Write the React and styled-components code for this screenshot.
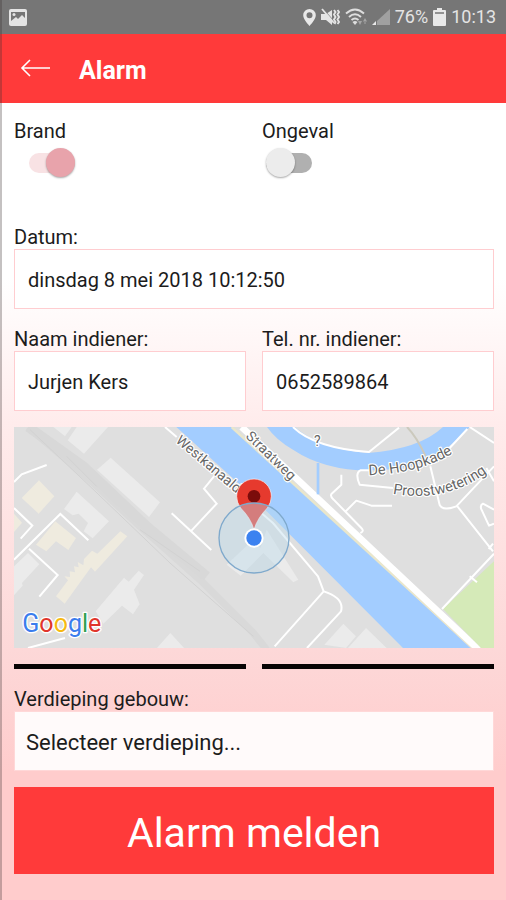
import React from "react";
import styled, { createGlobalStyle } from "styled-components";

const GlobalStyle = createGlobalStyle`
  *, *::before, *::after { box-sizing: border-box; }
  body { margin: 0; font-family: Roboto, "Liberation Sans", sans-serif; color: #1c1c1c; }
`;

const Page = styled.div`
  position: relative;
  display: flex;
  flex-direction: column;
  min-height: 100vh;
  background: #fff;

  &::before {
    content: "";
    position: absolute;
    inset: 0 auto 0 0;
    width: 2px;
    background: rgba(60, 50, 50, 0.3);
    pointer-events: none;
  }
`;

const StatusBar = styled.div`
  display: flex;
  align-items: center;
  justify-content: space-between;
  height: 34px;
  padding: 0 10px 0 9px;
  background: #767676;
  color: #e4e4e4;
  font-size: 18px;
  line-height: 34px;
`;

const StatusGroup = styled.div`
  display: flex;
  align-items: center;
  gap: 5px;
`;

const Header = styled.header`
  display: flex;
  align-items: center;
  gap: 28px;
  height: 69px;
  padding: 0 20px;
  background: #ff3a3a;
  color: #fff;
`;

const BackButton = styled.button`
  display: flex;
  padding: 0;
  border: 0;
  background: none;
  color: inherit;
  cursor: pointer;
`;

const Title = styled.h1`
  margin: 0;
  padding-top: 4px;
  font-size: 25px;
  line-height: 32px;
  font-weight: 700;
`;

const Form = styled.form`
  display: flex;
  flex: 1;
  flex-direction: column;
  padding: 16px 12px 26px 14px;
  background: linear-gradient(#fff 0%, #fff 22%, #ffecec 40%, #fdd7d7 70%, #ffcccc 84%);
`;

const Columns = styled.div`
  display: grid;
  grid-template-columns: 1fr 1fr;
  gap: 16px;
  margin-bottom: ${(p) => p.$after}px;
`;

const Field = styled.div`
  display: flex;
  flex-direction: column;
  min-width: 0;
  margin-bottom: ${(p) => p.$after || 0}px;
`;

const Label = styled.label`
  font-size: 20px;
  line-height: 24px;
`;

const Switch = styled.input`
  appearance: none;
  display: flex;
  align-items: center;
  width: 46px;
  height: 29px;
  margin: 5px 0 0 ${(p) => p.$indent}px;
  border-radius: 15px;
  cursor: pointer;

  &::before {
    content: "";
    width: 46px;
    height: 20px;
    border-radius: 10px;
    background: #b0b0b0;
  }
  &::after {
    content: "";
    flex: none;
    width: 29px;
    height: 29px;
    margin-left: -46px;
    border-radius: 50%;
    background: #ececec;
    box-shadow: 0 1px 2px rgba(0, 0, 0, 0.35);
  }
  &:checked::before { background: #f8e2e4; }
  &:checked::after { margin-left: -29px; background: #e8a3ab; }
`;

const TextInput = styled.input`
  width: 100%;
  height: 60px;
  padding: 2px 13px 0;
  border: 1px solid #ffcdd0;
  border-radius: 0;
  background: #fff;
  color: inherit;
  font: 20px Roboto, "Liberation Sans", sans-serif;
`;

const Select = styled.select`
  appearance: none;
  width: 100%;
  height: 60px;
  padding: 2px 11px 0;
  border: 1px solid #ffd8d8;
  border-radius: 0;
  background: #fffafa;
  color: inherit;
  font: 22px Roboto, "Liberation Sans", sans-serif;
`;

const MapView = styled.svg`
  display: block;
  width: 100%;
  height: 221px;
  margin-bottom: 16px;
  background: #dfdfdf;
`;

const Divider = styled.hr`
  width: 100%;
  height: 5px;
  margin: 0;
  border: 0;
  background: #080404;
`;

const SubmitButton = styled.button`
  height: 87px;
  padding: 4px 0 0;
  border: 0;
  background: #ff3a3a;
  color: #fff;
  font: 41px Roboto, "Liberation Sans", sans-serif;
  cursor: pointer;
`;

const PictureIcon = () => (
  <svg width="18" height="17" viewBox="0 0 18 17" aria-hidden="true">
    <rect width="18" height="17" rx="2" fill="#e4e4e4" />
    <path d="M2 3h14v6l-3-3-4 4-2-2-5 4z" fill="#767676" />
    <circle cx="5" cy="5.500" r="1.500" fill="#e4e4e4" />
  </svg>
);

const PinIcon = () => (
  <svg width="13" height="17" viewBox="0 0 13 17" aria-hidden="true">
    <path fillRule="evenodd" d="M6.500 0A6.300 6.300 0 0 0 .2 6.300C.2 10.500 6.500 17 6.500 17s6.300-6.500 6.300-10.700A6.300 6.300 0 0 0 6.500 0zm0 3.300a3 3 0 1 1 0 6 3 3 0 0 1 0-6z" fill="#e8e8e8" />
  </svg>
);

const MutedIcon = () => (
  <svg width="19" height="18" viewBox="0 0 19 18" fill="none" aria-hidden="true">
    <path d="M0 6h5l6-4v15l-6-5H0z" fill="#e4e4e4" />
    <path d="M2 1l11 12" stroke="#767676" strokeWidth="1" />
    <path d="M1 1l12 14" stroke="#e4e4e4" strokeWidth="1.800" />
    <path d="M13 2l1.500 2L13 6.500l1.500 2.500L13 11.500l1.500 2.500-1 2M16.500 2L18 4l-1.500 2.500L18 9l-1.500 2.500L18 14l-1.500 2" stroke="#e4e4e4" strokeWidth="1.900" />
  </svg>
);

const WifiIcon = () => (
  <svg width="22" height="18" viewBox="0 0 22 18" fill="none" aria-hidden="true">
    <path d="M1 5.500Q10 -2.500 19 5.500M4 9q6-5.500 12 0M6.500 12q3.500-3 7 0" stroke="#dedede" strokeWidth="1.900" />
    <path d="M7.500 14q2.500-2 5 0L10 17z" fill="#dedede" />
    <path d="M13 13h4l-2 4zM18 13.500h4l-2-3.500zM19.500 13h1v3h-1z" fill="#a6a6a6" />
  </svg>
);

const SignalIcon = () => (
  <svg width="18" height="18" viewBox="0 0 18 18" aria-hidden="true">
    <path d="M18 1v16H5v-4z" fill="#a0a0a0" />
    <path d="M4 13v4H0z" fill="#e8e8e8" />
  </svg>
);

const BatteryIcon = () => (
  <svg width="13" height="18" viewBox="0 0 13 18" aria-hidden="true">
    <path d="M4 0h5v2h3q1 0 1 1v14q0 1-1 1H1q-1 0-1-1V3q0-1 1-1h3z" fill="#e8e8e8" />
    <path d="M2 4h9v2H2z" fill="#929292" />
  </svg>
);

const BackIcon = () => (
  <svg width="31" height="20" viewBox="0 0 31 20" fill="none" stroke="#fff" strokeWidth="1.600" aria-hidden="true">
    <path d="M10 1L2 9l8 8M2 9h28" />
  </svg>
);

const GOOGLE = [
  ["G", "#3b7ded"],
  ["o", "#e0352b"],
  ["o", "#f6b912"],
  ["g", "#3b7ded"],
  ["l", "#2fa04e"],
  ["e", "#e0352b"],
];

const LocationMap = () => (
  <MapView viewBox="42 22 1440 663" preserveAspectRatio="xMidYMid slice" role="img" aria-label="Kaart">
    <defs>
      <path id="westkanaal" d="M525 66L750 256" />
      <path id="straatweg" d="M735 52L900 212" />
      <path id="hoopkade" d="M1106 167Q1280 160 1380 86" />
      <path id="proost" d="M1178 222Q1350 254 1485 140" />
    </defs>

    <g fill="none">
      <path d="M85 22L280 190 420 320 600 480 760 640 800 690" strokeWidth="22" stroke="#d9d9d9" />
      <path d="M85 22L250 140 440 320 620 470" strokeWidth="30" stroke="#d8d8d8" />
      <path d="M90 30L270 200 510 430 760 650M200 110L290 200 M420 330L600 455" strokeWidth="3" stroke="#d2d2d2" />
    </g>

    <g fill="#ebebeb">
      <path d="M160 22L195 50 215 22zM230 22H324L252 102 203 62z" />
      <path d="M332 114L480 248 447 292 291 150z" />
      <path d="M230 216L327 305 278 356 251 335 264 310 236 282 218 287 192 268z" />
      <path d="M42 440L84 400 118 434 66 490 68 498 42 527z" />
      <path d="M372 474L386 486 416 453 432 466 402 510 419 554 399 584 366 558 310 612 287 575z" />
      <path d="M470 686L511 640 553 686z" />
      <path d="M973 675L1030 612 1068 650 1038 685zM1044 685L1098 625 1160 685z" />
      <path d="M680 435L755 365 795 395 722 468zM800 330L895 480 880 488 780 390z" />
    </g>
    <g fill="#efebdf">
      <path d="M117 182L163 230 116 282 65 235z" />
      <path d="M42 282L66 309 42 337z" />
      <path d="M166 305L228 355 205 391 168 365 139 395 108 375z" />
      <path d="M361 335L382 350 285 456 273 443 194 552 168 530 204 482 193 470 210 472 209 455 225 458 222 440 236 443 233 427 250 437 252 418 276 393 292 402z" />
    </g>

    <g fill="none" stroke="#fff" strokeWidth="6">
      <path d="M42 187L65 164 140 136M42 265L97 318 62 357M42 420L181 283 265 362M87 387L173 466 118 531M84 685L195 655" />
      <path d="M642 170L612 207 650 252 575 332M515 281L634 391M495 22L530 52" />
    </g>

    <path d="M529 22H700L1412 686H1210L860 335 720 195z" fill="#a3cdff" />
    <path d="M695 22L1420 686" stroke="#e9e6cb" strokeWidth="8" />
    <path d="M725 22L1436 690" stroke="#fff" strokeWidth="20" />

    <g transform="translate(759 0)">
      <path d="M42 22H125Q200 88 345 100Q500 88 570 22H650Q555 130 430 147Q240 170 120 90Q70 62 42 22z" fill="#a3cdff" />
      <path d="M195 130V224" stroke="#a3cdff" strokeWidth="8" />
      <path d="M723 425V685H684L570 568z" fill="#d5eab8" />
      <g fill="none" stroke="#fff" strokeWidth="6" strokeLinejoin="round">
        <path d="M120 22Q185 85 348 97L438 24" />
        <path d="M532 140L560 256Q570 275 610 260L723 140M650 22L723 70M643 28L590 85M610 256L720 395M723 402L567 568M720 372L707 388M650 470L672 488" />
        <path d="M420 205L320 195Q305 160 322 152H350M265 165V195L236 222Q230 230 242 240L325 325Q335 335 322 340M278 275L310 243 355 258H417M723 185L700 145M723 270L690 252Q678 258 688 275L708 318 723 312" />
        <path d="M25 280L60 310 195 470 212 515 65 680M212 515Q275 535 264 575L162 685" />
      </g>
      <path d="M462 22Q490 50 518 110" fill="none" stroke="#cbc9bd" strokeWidth="6" />
    </g>

    <g fill="#666" stroke="#fff" strokeWidth="7" strokeLinejoin="round" paintOrder="stroke" fontSize="42">
      <text><textPath href="#westkanaal">Westkanaald</textPath></text>
      <text><textPath href="#straatweg">Straatweg</textPath></text>
      <text fontSize="44"><textPath href="#hoopkade">De Hoopkade</textPath></text>
      <text fontSize="44"><textPath href="#proost">Proostwetering</textPath></text>
      <text x="942" y="80">?</text>
    </g>

    <path d="M762 330Q752 295 722 265Q710 248 710 230A52 52 0 0 1 814 230Q814 248 802 265Q772 295 762 330z" fill="#e63a2e" stroke="#fff" strokeOpacity=".6" strokeWidth="3" />
    <circle cx="762" cy="230" r="19" fill="#7b0c0b" />
    <circle cx="762" cy="355" r="105" fill="#bddcec" fillOpacity=".42" stroke="#7fa9cc" strokeWidth="4" />
    <circle cx="762" cy="355" r="29" fill="#fff" />
    <circle cx="762" cy="355" r="23" fill="#3b82f0" />

    <text x="67" y="637" fontSize="75" stroke="#fff" strokeWidth="8" strokeLinejoin="round" paintOrder="stroke">
      {GOOGLE.map(([letter, color], i) => (
        <tspan key={i} fill={color}>{letter}</tspan>
      ))}
    </text>
  </MapView>
);

export default function App() {
  return (
    <>
      <GlobalStyle />
      <Page>
        <StatusBar>
          <PictureIcon />
          <StatusGroup>
            <PinIcon />
            <MutedIcon />
            <WifiIcon />
            <SignalIcon />
            <span>76%</span>
            <BatteryIcon />
            <span>10:13</span>
          </StatusGroup>
        </StatusBar>
        <Header>
          <BackButton type="button" aria-label="Terug">
            <BackIcon />
          </BackButton>
          <Title>Alarm</Title>
        </Header>
        <Form onSubmit={(e) => e.preventDefault()}>
          <Columns $after={48}>
            <Field>
              <Label htmlFor="brand">Brand</Label>
              <Switch id="brand" type="checkbox" role="switch" $indent={15} defaultChecked />
            </Field>
            <Field>
              <Label htmlFor="ongeval">Ongeval</Label>
              <Switch id="ongeval" type="checkbox" role="switch" $indent={4} />
            </Field>
          </Columns>
          <Field $after={18}>
            <Label htmlFor="datum">Datum:</Label>
            <TextInput id="datum" defaultValue="dinsdag 8 mei 2018 10:12:50" />
          </Field>
          <Columns $after={16}>
            <Field>
              <Label htmlFor="naam">Naam indiener:</Label>
              <TextInput id="naam" defaultValue="Jurjen Kers" />
            </Field>
            <Field>
              <Label htmlFor="tel">Tel. nr. indiener:</Label>
              <TextInput id="tel" type="tel" defaultValue="0652589864" />
            </Field>
          </Columns>
          <LocationMap />
          <Columns $after={18}>
            <Divider />
            <Divider />
          </Columns>
          <Field $after={16}>
            <Label htmlFor="verdieping">Verdieping gebouw:</Label>
            <Select id="verdieping" defaultValue="">
              <option value="">Selecteer verdieping...</option>
            </Select>
          </Field>
          <SubmitButton type="submit">Alarm melden</SubmitButton>
        </Form>
      </Page>
    </>
  );
}
